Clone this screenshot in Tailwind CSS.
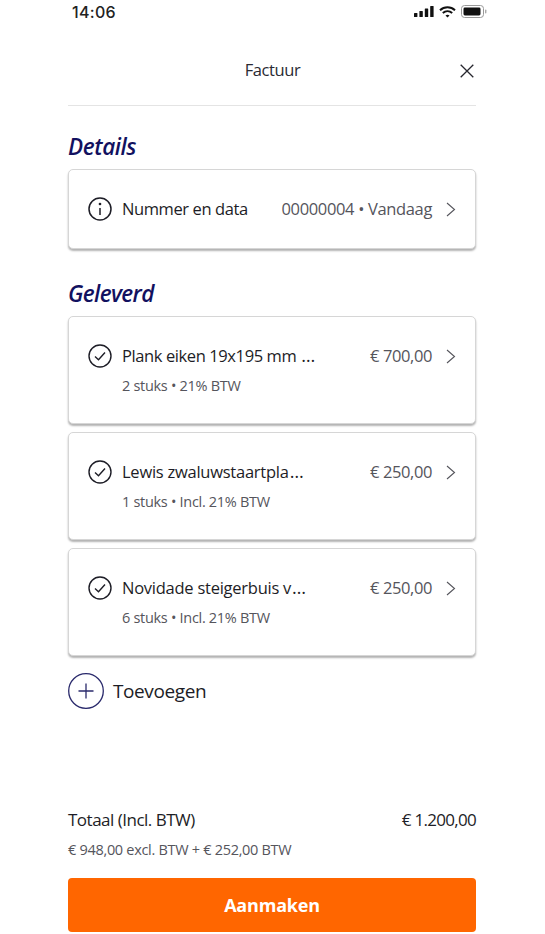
<!DOCTYPE html>
<html lang="nl">
<head>
    <meta charset="UTF-8">
    <meta name="viewport" content="width=device-width, initial-scale=1.0">
    <title>Factuur</title>
    <script src="https://cdn.jsdelivr.net/npm/@tailwindcss/browser@4"></script>
</head>
<body class="bg-white font-['Open_Sans',sans-serif] text-[#1d1d26]">
<div class="w-[545px] h-[934px] overflow-hidden flex flex-col">

    <!-- Status bar -->
    <div class="h-[23px] pl-[72px] pr-[58px] flex items-center justify-between">
        <span class="font-['Inter',sans-serif] text-[16px] font-medium leading-none tracking-[0.3px] text-[#222]">14:06</span>
        <div class="flex items-center gap-[5px]">
            <svg class="w-[20px] h-[11px]" viewBox="0 0 20 11" fill="#111"><rect x="0" y="7" width="3.4" height="4" rx=".6"/><rect x="5.4" y="5" width="3.4" height="6" rx=".6"/><rect x="10.8" y="2.5" width="3.4" height="8.5" rx=".6"/><rect x="16.2" y="0" width="3.4" height="11" rx=".6"/></svg>
            <svg class="w-[17px] h-[12px]" viewBox="0 0 17 12" fill="none" stroke="#111" stroke-width="2"><path d="M1 4.2c4.2-3.8 10.8-3.8 15 0"/><path d="M3.8 7c2.7-2.3 6.7-2.3 9.4 0"/><path d="M8.5 11.6 6.5 9.5c1.2-.9 2.8-.9 4 0z" fill="#111" stroke="none"/></svg>
            <svg class="w-[26px] h-[13px]" viewBox="0 0 26 13" fill="none"><rect x=".5" y=".5" width="22" height="12" rx="3" stroke="#999"/><rect x="2.5" y="2.5" width="17" height="8" rx="1.4" fill="#111"/><rect x="24" y="4.5" width="1.4" height="4" rx=".7" fill="#aaa"/></svg>
        </div>
    </div>

    <main class="flex-1 px-[68px] pr-[69px] flex flex-col">
        <!-- Header -->
        <header class="h-[83px] border-b border-[#e4e4e4] flex items-center justify-between relative shrink-0">
            <h1 class="w-full text-center text-[16.5px] leading-none pt-[13px] pl-[1px] tracking-[-0.4px] text-[#2a2a33]">Factuur</h1>
            <svg class="absolute right-[2px] top-[41px] w-[14px] h-[14px]" viewBox="0 0 14 14" fill="none" stroke="#26262e" stroke-width="1.3"><path d="M.7.7l12.6 12.6M13.3.7.7 13.3"/></svg>
        </header>

        <h2 class="mt-[27px] text-[22.5px] leading-[28px] font-semibold italic tracking-[-0.4px] text-[#12115f]">Details</h2>
        <div class="mt-[8px] h-[80px] bg-white border border-[#d6d6d6] rounded-[5px] shadow-[0_2px_2px_rgba(0,0,0,0.3)] flex items-center pl-[19px] pr-[19px]">
            <svg class="w-[24px] h-[24px] shrink-0" viewBox="0 0 24 24" fill="none" stroke="#1d1d26" stroke-width="1.5"><circle cx="12" cy="12" r="11"/><path d="M12 11v7"/><circle cx="12" cy="7" r=".6" fill="#1d1d26"/></svg>
            <span class="ml-[10px] text-[16.5px] tracking-[-0.4px]">Nummer en data</span>
            <span class="ml-auto text-[16.5px] tracking-[-0.35px] text-[#55555c]">00000004 • Vandaag</span>
            <svg class="ml-[14px] w-[10px] h-[15px] shrink-0" viewBox="0 0 10 15" fill="none" stroke="#55555c" stroke-width="1.1"><path d="M1 1l7.5 6.5L1 14"/></svg>
        </div>

        <h2 class="mt-[31px] text-[22.5px] leading-[28px] font-semibold italic tracking-[-0.6px] text-[#12115f]">Geleverd</h2>
        <div class="mt-[8px] flex flex-col gap-[8px]">
            <div class="h-[108px] bg-white border border-[#d6d6d6] rounded-[5px] shadow-[0_2px_2px_rgba(0,0,0,0.3)] pl-[19px] pr-[19px] pt-[26px]">
                <div class="flex items-center h-[26px]">
                    <svg class="w-[24px] h-[24px] shrink-0" viewBox="0 0 24 24" fill="none" stroke="#1d1d26" stroke-width="1.4"><circle cx="12" cy="12" r="11"/><path d="M7 12.5l3.5 3.2L17 8.5"/></svg>
                    <span class="ml-[10px] text-[16.5px] tracking-[-0.4px] whitespace-nowrap">Plank eiken 19x195 mm <span class="ml-[1px] text-[18px] leading-none">…</span></span>
                    <span class="ml-auto text-[16.5px] tracking-[-0.4px] text-[#55555c]">€ 700,00</span>
                    <svg class="ml-[14px] w-[10px] h-[15px] shrink-0" viewBox="0 0 10 15" fill="none" stroke="#55555c" stroke-width="1.1"><path d="M1 1l7.5 6.5L1 14"/></svg>
                </div>
                <p class="ml-[34px] mt-[4px] text-[14.5px] leading-[26px] tracking-[-0.3px] text-[#55555c]">2 stuks • 21% BTW</p>
            </div>
            <div class="h-[108px] bg-white border border-[#d6d6d6] rounded-[5px] shadow-[0_2px_2px_rgba(0,0,0,0.3)] pl-[19px] pr-[19px] pt-[26px]">
                <div class="flex items-center h-[26px]">
                    <svg class="w-[24px] h-[24px] shrink-0" viewBox="0 0 24 24" fill="none" stroke="#1d1d26" stroke-width="1.4"><circle cx="12" cy="12" r="11"/><path d="M7 12.5l3.5 3.2L17 8.5"/></svg>
                    <span class="ml-[10px] text-[16.5px] tracking-[-0.25px] whitespace-nowrap">Lewis zwaluwstaartpla<span class="ml-[1px] text-[18px] leading-none">…</span></span>
                    <span class="ml-auto text-[16.5px] tracking-[-0.4px] text-[#55555c]">€ 250,00</span>
                    <svg class="ml-[14px] w-[10px] h-[15px] shrink-0" viewBox="0 0 10 15" fill="none" stroke="#55555c" stroke-width="1.1"><path d="M1 1l7.5 6.5L1 14"/></svg>
                </div>
                <p class="ml-[34px] mt-[4px] text-[14.5px] leading-[26px] tracking-[-0.3px] text-[#55555c]">1 stuks • Incl. 21% BTW</p>
            </div>
            <div class="h-[108px] bg-white border border-[#d6d6d6] rounded-[5px] shadow-[0_2px_2px_rgba(0,0,0,0.3)] pl-[19px] pr-[19px] pt-[26px]">
                <div class="flex items-center h-[26px]">
                    <svg class="w-[24px] h-[24px] shrink-0" viewBox="0 0 24 24" fill="none" stroke="#1d1d26" stroke-width="1.4"><circle cx="12" cy="12" r="11"/><path d="M7 12.5l3.5 3.2L17 8.5"/></svg>
                    <span class="ml-[10px] text-[16.5px] tracking-[-0.25px] whitespace-nowrap">Novidade steigerbuis v<span class="ml-[1px] text-[18px] leading-none">…</span></span>
                    <span class="ml-auto text-[16.5px] tracking-[-0.4px] text-[#55555c]">€ 250,00</span>
                    <svg class="ml-[14px] w-[10px] h-[15px] shrink-0" viewBox="0 0 10 15" fill="none" stroke="#55555c" stroke-width="1.1"><path d="M1 1l7.5 6.5L1 14"/></svg>
                </div>
                <p class="ml-[34px] mt-[4px] text-[14.5px] leading-[26px] tracking-[-0.3px] text-[#55555c]">6 stuks • Incl. 21% BTW</p>
            </div>
        </div>

        <!-- Add -->
        <div class="mt-[17px] flex items-center">
            <svg class="w-[36px] h-[36px] shrink-0" viewBox="0 0 36 36" fill="none" stroke="#2a2a6c" stroke-width="1.3"><circle cx="18" cy="18" r="17.3"/><path d="M18 10.5v15M10.5 18h15"/></svg>
            <span class="ml-[9px] text-[19px] tracking-[-0.4px]">Toevoegen</span>
        </div>

        <!-- Totals -->
        <div class="mt-auto flex items-center justify-between text-[17px] leading-[24px] tracking-[-0.5px]">
            <span>Totaal (Incl. BTW)</span>
            <span class="tracking-[-0.7px]">€ 1.200,00</span>
        </div>
        <p class="mt-[6px] text-[14.5px] leading-[24px] tracking-[-0.3px] text-[#55555c]">€ 948,00 excl. BTW + € 252,00 BTW</p>
        <button class="mt-[16px] mb-[2px] h-[54px] shrink-0 bg-[#ff6600] rounded-[4px] text-white text-[18px] font-bold tracking-[-0.2px]">Aanmaken</button>
    </main>
</div>
</body>
</html>
